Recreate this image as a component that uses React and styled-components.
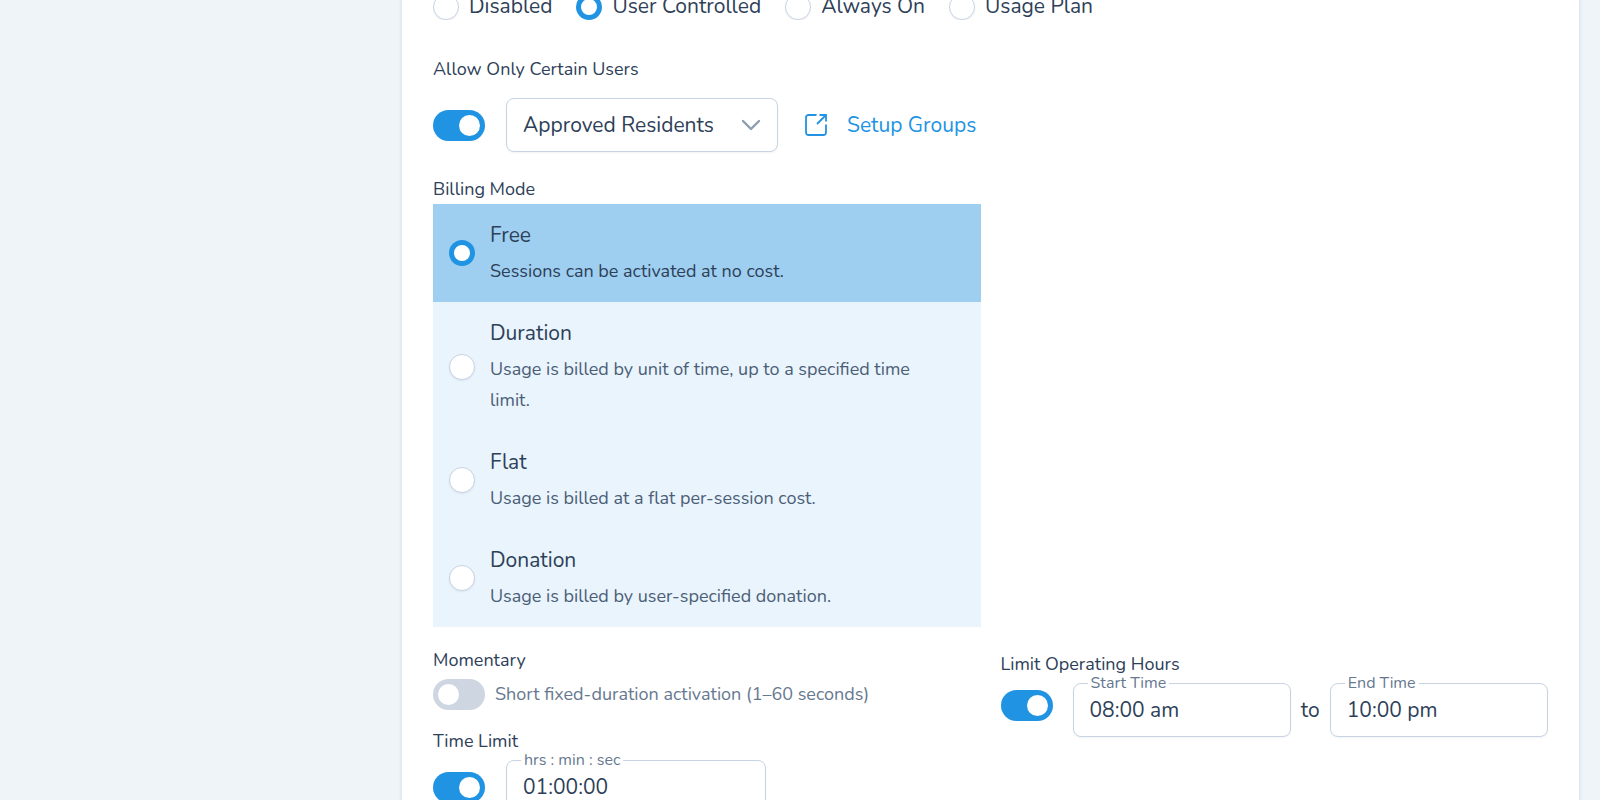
import React, { useState } from "react";
import styled, { createGlobalStyle, css } from "styled-components";

const color = {
  page: "#eff4f9",
  card: "#ffffff",
  edge: "#e2e8f0",
  border: "#c8d4e3",
  off: "#ced6e1",
  ink: "#2d4058",
  soft: "#4c5e76",
  muted: "#66788f",
  blue: "#2094e3",
  tint: "#e9f4fd",
  tintActive: "#9fcff0",
};

const GlobalStyle = createGlobalStyle`
  *, *::before, *::after { box-sizing: border-box; }
  body {
    margin: 0;
    background: ${color.page};
    color: ${color.ink};
    font-family: "Nunito", "Lato", "Open Sans", sans-serif;
    font-size: 21px;
    line-height: 32px;
  }
  input, select { font: inherit; color: inherit; margin: 0; }
`;

const Page = styled.main`
  display: grid;
  grid-template-columns: 1fr 3fr;
  padding-right: 20px;
  column-gap: 8px;
  height: 100vh;
  overflow-y: auto;
  scrollbar-width: none;
`;

const Card = styled.section`
  grid-column: 2;
  min-height: 100%;
  height: max-content;
  padding: 0 31px 32px;
  background: ${color.card};
  border: solid ${color.edge};
  border-width: 0 1px;
  box-shadow: 0 0 3px rgba(45, 64, 88, 0.12);
`;

const Columns = styled.div`
  display: grid;
  grid-template-columns: 1fr 1fr;
  column-gap: 20px;
  align-items: start;
`;

const ModeRow = styled.div`
  display: flex;
  align-items: flex-end;
  gap: 24px;
  height: 20px;
  overflow: hidden;
  white-space: nowrap;
`;

const ModeOption = styled.label`
  display: flex;
  align-items: center;
  gap: 10px;
  height: 26px;
`;

const ModeText = styled.span`
  padding-bottom: 2px;
`;

const Radio = styled.input.attrs({ type: "radio" })`
  appearance: none;
  flex: none;
  width: 26px;
  height: 26px;
  border: 1px solid ${color.border};
  border-radius: 50%;
  background: #fff;
  box-shadow: 0 1px 2px rgba(45, 55, 72, 0.08);

  &:checked {
    border: 5px solid ${color.blue};
    box-shadow: none;
  }
`;

const Switch = styled.input.attrs({ type: "checkbox", role: "switch" })`
  appearance: none;
  flex: none;
  display: flex;
  align-items: center;
  width: 52px;
  height: 31px;
  padding: 0 5px;
  border-radius: 16px;
  background: ${color.off};

  &::before {
    content: "";
    width: 21px;
    height: 21px;
    border-radius: 50%;
    background: #fff;
  }
  &:checked {
    justify-content: flex-end;
    background: ${color.blue};
  }
`;

const Heading = styled.h2`
  margin: 0;
  padding-top: ${(p) => p.$space || 0}px;
  font-size: 18px;
  font-weight: 400;
  line-height: 26px;
`;

const ControlRow = styled.div`
  display: flex;
  align-items: center;
  gap: ${(p) => p.$gap || 21}px;
  padding-top: ${(p) => p.$space || 0}px;
`;

const box = css`
  width: 100%;
  height: 54px;
  padding: 0 16px;
  border: 1px solid ${color.border};
  border-radius: 8px;
  background: #fff;
  box-shadow: 0 1px 2px rgba(45, 55, 72, 0.06);
`;

const SelectWrap = styled.div`
  position: relative;
  flex: 0 0 272px;
`;

const Select = styled.select`
  ${box}
  appearance: none;
`;

const Chevron = styled.svg`
  position: absolute;
  right: 17px;
  top: 17px;
  pointer-events: none;
`;

const GroupsLink = styled.a`
  display: flex;
  align-items: center;
  gap: 20px;
  padding-left: 6px;
  color: ${color.blue};
  text-decoration: none;
`;

const OptionList = styled.div`
  padding-top: 2px;
`;

const Option = styled.label`
  display: flex;
  align-items: center;
  gap: 15px;
  padding: 15px 31px 15px 16px;
  background: ${(p) => (p.$active ? color.tintActive : color.tint)};
`;

const OptionText = styled.span`
  display: flex;
  flex-direction: column;
  gap: 5px;
`;

const OptionTitle = styled.span`
  line-height: 32px;
`;

const OptionNote = styled.span`
  font-size: 18px;
  line-height: 31px;
  color: ${(p) => (p.$active ? color.ink : color.soft)};
`;

const Hint = styled.label`
  font-size: 18px;
  color: ${color.muted};
`;

const FieldWrap = styled.div`
  position: relative;
  flex: ${(p) => (p.$width ? `0 0 ${p.$width}px` : "1 1 0")};
  min-width: 0;
`;

const FieldInput = styled.input`
  ${box}
`;

const FieldLabel = styled.label`
  position: absolute;
  left: 15px;
  top: -8px;
  padding: 0 3px;
  background: #fff;
  font-size: 16px;
  line-height: 16px;
  color: ${color.muted};
`;

const HoursRow = styled.div`
  display: flex;
  align-items: center;
  gap: 20px;
  padding-top: 6px;
`;

const HoursSwitch = styled.div`
  display: flex;
  padding-bottom: 9px;
`;

const TimeRange = styled.div`
  flex: 1;
  display: flex;
  align-items: center;
  gap: 10px;
`;

function Field({ id, label, value, width }) {
  return (
    <FieldWrap $width={width}>
      <FieldInput id={id} type="text" defaultValue={value} />
      <FieldLabel htmlFor={id}>{label}</FieldLabel>
    </FieldWrap>
  );
}

const modes = ["Disabled", "User Controlled", "Always On", "Usage Plan"];

const billing = [
  ["Free", "Sessions can be activated at no cost."],
  ["Duration", "Usage is billed by unit of time, up to a specified time limit."],
  ["Flat", "Usage is billed at a flat per-session cost."],
  ["Donation", "Usage is billed by user-specified donation."],
];

export default function App() {
  const [mode, setMode] = useState("User Controlled");
  const [plan, setPlan] = useState("Free");

  return (
    <>
      <GlobalStyle />
      <Page>
        <Card>
          <ModeRow role="radiogroup" aria-label="Mode">
            {modes.map((m) => (
              <ModeOption key={m}>
                <Radio name="mode" checked={mode === m} onChange={() => setMode(m)} />
                <ModeText>{m}</ModeText>
              </ModeOption>
            ))}
          </ModeRow>

          <Heading $space={36}>Allow Only Certain Users</Heading>
          <ControlRow $space={16}>
            <Switch aria-label="Allow Only Certain Users" defaultChecked />
            <SelectWrap>
              <Select aria-label="User group" defaultValue="approved">
                <option value="approved">Approved Residents</option>
              </Select>
              <Chevron width="20" height="20" viewBox="0 0 20 20" fill="none" stroke="#8d9db1" strokeWidth="2.4" strokeLinecap="round" strokeLinejoin="round" aria-hidden="true">
                <path d="M2 6l8 8 8-8" />
              </Chevron>
            </SelectWrap>
            <GroupsLink href="#groups">
              <svg width="22" height="22" viewBox="0 0 22 22" fill="none" stroke="currentColor" strokeWidth="1.8" strokeLinejoin="round" aria-hidden="true">
                <path d="M11.5 1H3.5A2.5 2.5 0 0 0 1 3.5v15A2.5 2.5 0 0 0 3.5 21h15a2.5 2.5 0 0 0 2.500-2.500V10.500" />
                <path d="M14.5 1H21v6.500M21 1l-9 9" strokeLinejoin="miter" />
              </svg>
              Setup Groups
            </GroupsLink>
          </ControlRow>

          <Columns>
            <div>
              <Heading $space={24}>Billing Mode</Heading>
              <OptionList role="radiogroup" aria-label="Billing Mode">
                {billing.map(([title, note]) => (
                  <Option key={title} $active={plan === title}>
                    <Radio name="billing" checked={plan === title} onChange={() => setPlan(title)} />
                    <OptionText>
                      <OptionTitle>{title}</OptionTitle>
                      <OptionNote $active={plan === title}>{note}</OptionNote>
                    </OptionText>
                  </Option>
                ))}
              </OptionList>
            </div>
          </Columns>

          <Columns>
            <div>
              <Heading $space={20}>Momentary</Heading>
              <ControlRow $gap={10} $space={5}>
                <Switch id="momentary" />
                <Hint htmlFor="momentary">Short fixed-duration activation (1–60 seconds)</Hint>
              </ControlRow>
              <Heading $space={18}>Time Limit</Heading>
              <ControlRow $space={6}>
                <Switch aria-label="Time Limit" defaultChecked />
                <Field id="limit" label="hrs : min : sec" value="01:00:00" width={260} />
              </ControlRow>
            </div>
            <div>
              <Heading $space={24}>Limit Operating Hours</Heading>
              <HoursRow>
                <HoursSwitch>
                  <Switch aria-label="Limit Operating Hours" defaultChecked />
                </HoursSwitch>
                <TimeRange>
                  <Field id="start" label="Start Time" value="08:00 am" />
                  <span>to</span>
                  <Field id="end" label="End Time" value="10:00 pm" />
                </TimeRange>
              </HoursRow>
            </div>
          </Columns>
        </Card>
      </Page>
    </>
  );
}
